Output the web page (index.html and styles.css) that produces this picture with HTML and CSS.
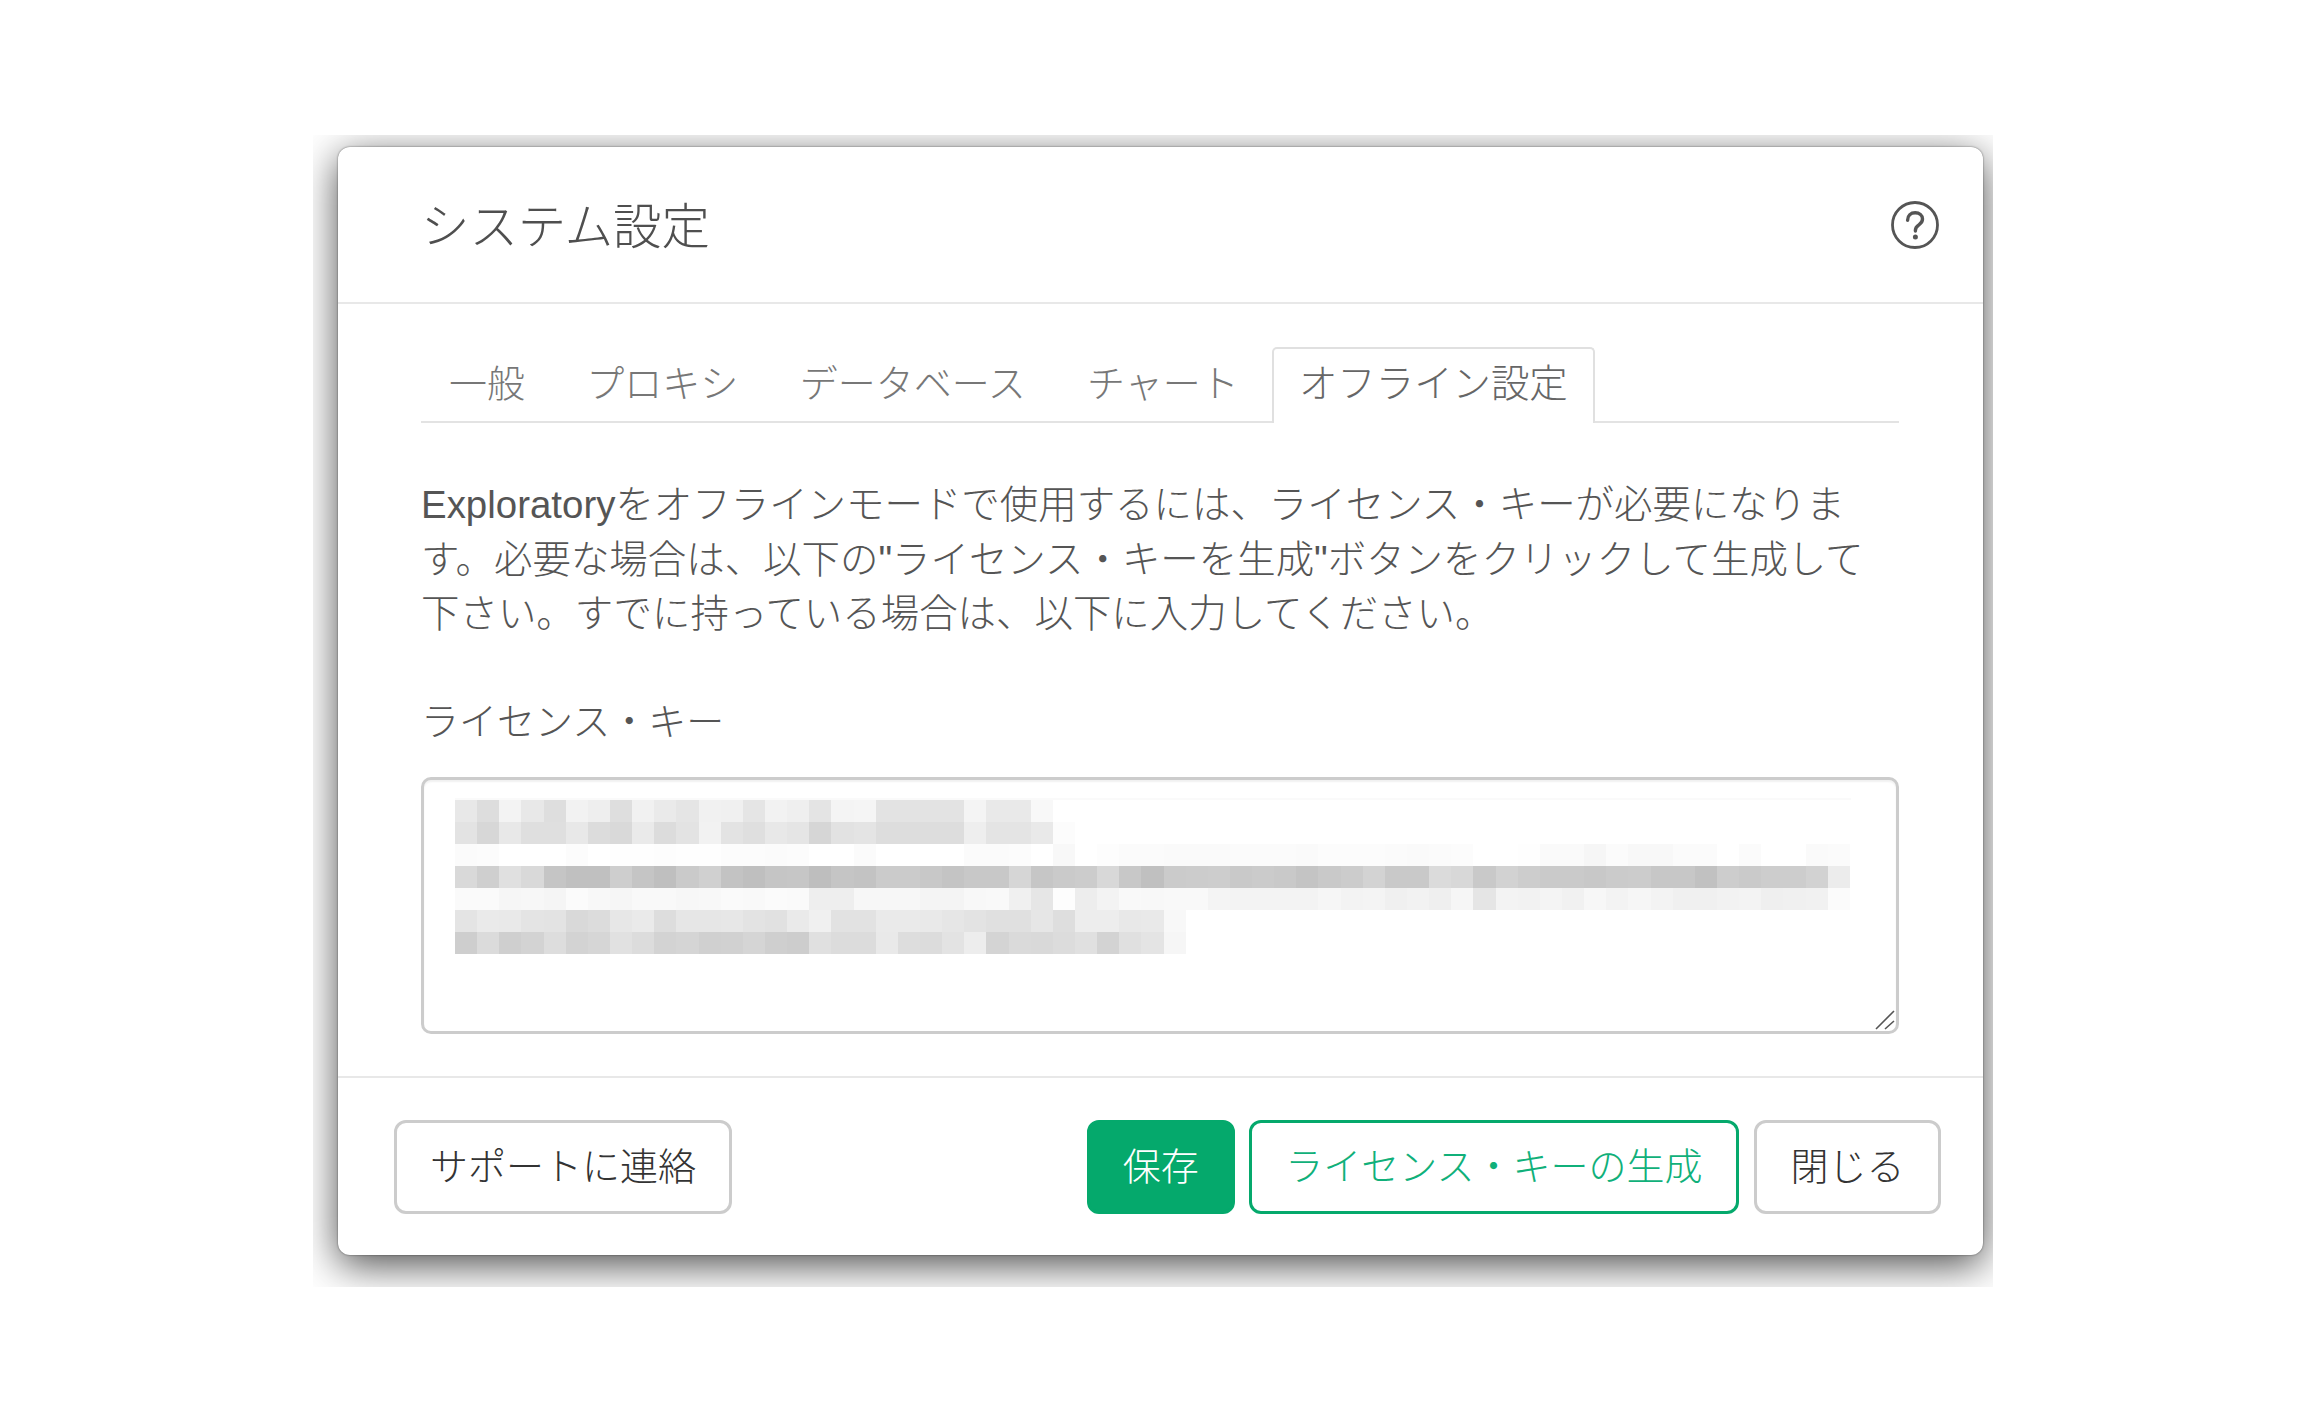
FILE: index.html
```html
<!DOCTYPE html>
<html lang="ja">
<head>
<meta charset="utf-8">
<title>システム設定</title>
<link rel="stylesheet" href="styles.css">
</head>
<body>
<div class="frame">
  <div class="modal">
    <header class="modal-header">
      <h1 class="modal-title">システム設定</h1>
      <svg class="help-icon" width="48" height="48" viewBox="0 0 48 48" fill="none" stroke="#555" aria-label="ヘルプ">
        <circle cx="24" cy="24" r="22.5" stroke-width="2.8"/>
        <path d="M16.6 19.2c0-4.6 3.3-7.4 7.6-7.4 4.2 0 7.3 2.6 7.3 6.3 0 2.8-1.5 4.3-3.6 5.7-2.3 1.5-3.5 2.6-3.5 5.4v.8" stroke-width="3.4" stroke-linecap="round"/>
        <circle cx="24.4" cy="36" r="2.5" fill="#555" stroke="none"/>
      </svg>
    </header>
    <div class="modal-body">
      <nav class="tabs">
        <a class="tab">一般</a>
        <a class="tab">プロキシ</a>
        <a class="tab">データベース</a>
        <a class="tab">チャート</a>
        <a class="tab tab-active">オフライン設定</a>
      </nav>
      <p class="description">Exploratoryをオフラインモードで使用するには、ライセンス・キーが必要になります。必要な場合は、以下の"ライセンス・キーを生成"ボタンをクリックして生成して下さい。すでに持っている場合は、以下に入力してください。</p>
      <label class="field-label">ライセンス・キー</label>
      <div class="key-box">
        <div class="key-pixels" id="key-pixels"></div>
        <svg class="resizer" width="20" height="20" viewBox="0 0 20 20" fill="none" stroke="#555" stroke-width="1.6">
          <path d="M1 19 19 1M10 19l9-8"/>
        </svg>
      </div>
    </div>
    <footer class="modal-footer">
      <button class="btn btn-default">サポートに連絡</button>
      <div class="footer-actions">
        <button class="btn btn-primary">保存</button>
        <button class="btn btn-outline">ライセンス・キーの生成</button>
        <button class="btn btn-default btn-close">閉じる</button>
      </div>
    </footer>
  </div>
</div>
<script src="pixels.js"></script>
</body>
</html>
```
FILE: styles.css
```css
* { box-sizing: border-box; }
html, body { margin: 0; background: #fff; }
body {
  padding: 135px 0 0 313px;
  font-family: "Liberation Sans", "Noto Sans CJK JP", sans-serif;
  font-weight: 300;
  color: #555;
}
.frame {
  width: 1680px;
  height: 1152px;
  padding: 12px 10px 32px 25px;
  overflow: hidden;
}
.modal {
  width: 1645px;
  height: 1108px;
  background: #fff;
  border-radius: 12px;
  box-shadow: 0 0 2px rgba(0, 0, 0, .55), 0 10px 40px rgba(0, 0, 0, .7);
  display: flex;
  flex-direction: column;
}
.modal-header {
  height: 157px;
  padding: 0 44px 3px 83px;
  border-bottom: 2px solid #e8e8e8;
  display: flex;
  align-items: center;
  justify-content: space-between;
}
.modal-title {
  margin: 0;
  font-size: 48.4px;
  font-weight: 300;
  color: #4f4f4f;
}
.help-icon {
  position: relative;
  top: 2px;
}
.modal-body {
  padding: 43px 84px 0 83px;
  height: 772px;
}
.tabs {
  display: flex;
  height: 76px;
  border-bottom: 2px solid #e3e3e3;
}
.tab {
  height: 76px;
  margin-right: 5.3px;
  padding: 0 26px;
  border: 2px solid transparent;
  border-bottom: 0;
  border-radius: 5px 5px 0 0;
  font-size: 38px;
  line-height: 70px;
  color: #777;
}
.tab-active {
  margin-right: 0;
  padding: 0 25px;
  border-color: #e0e0e0;
  background: #fff;
  font-size: 38.4px;
  color: #666;
}
.description {
  margin: 55px 0 0;
  font-size: 38.45px;
  line-height: 54.6px;
  color: #555;
}
.field-label {
  display: block;
  margin-top: 53px;
  font-size: 38px;
  line-height: 54px;
  color: #555;
}
.key-box {
  position: relative;
  height: 257px;
  margin-top: 28px;
  padding: 18px 0 0 31px;
  border: 3px solid #ccc;
  border-radius: 10px;
  box-shadow: inset 0 2px 2px rgba(0, 0, 0, .06);
}
.key-pixels {
  display: grid;
  grid-template-columns: repeat(63, 22.15px);
  grid-auto-rows: 22px;
  border-top: 2px solid #fafafa;
  width: 1396px;
  filter: blur(.6px);
}
.resizer {
  position: absolute;
  right: 1px;
  bottom: 1px;
}
.modal-footer {
  flex: 1;
  padding: 0 42px 0 56px;
  border-top: 2px solid #e8e8e8;
  display: flex;
  align-items: center;
  justify-content: space-between;
}
.footer-actions {
  display: flex;
  align-items: center;
}
.btn {
  height: 94px;
  padding: 0 33px 7px;
  border: 3px solid #ccc;
  border-radius: 12px;
  background: #fff;
  font: inherit;
  font-size: 38px;
  color: #333;
}
.btn-primary {
  background: #05a96c;
  border-color: #05a96c;
  color: #fff;
}
.btn-outline {
  margin-left: 14px;
  padding: 0 33.5px 7px;
  border-color: #05a96c;
  color: #10b07a;
}
.btn-close {
  margin-left: 15px;
  padding: 0 33.5px 7px;
}
```
FILE: pixels.js
```js
var rows = [
  "e8 dd f3 e8 de f2 ee de f1 ea e5 f1 f0 e5 f2 ef e4 f4 f5 e3 e3 e3 e3 f4 e9 e9 f8",
  "e3 d7 e8 df df e8 dc d9 ea dc e3 f2 e3 df e8 e5 d6 e2 e4 dd dd dd dd ee e4 e4 e9 fc",
  "fb fc ff ff ff fc ff fe fe fd fe fe fc fc fb fc ff ff fb ff ff ff ff fb fb fc ff f8 ff fd fb fb fa fa fa fb fb fb fa fc fc fc fb fa fb fc ff ff fe fa fa f6 fb f8 f8 fb fb ff fb ff ff fa fb",
  "d9 cf e0 d9 c5 c0 c0 ce c5 bf ca d0 c3 bf c5 c6 be c5 c3 cb cb c8 c4 c8 c8 d6 c6 ca cc d8 c8 c0 cb cc cd c9 cb c9 c4 c9 cc d3 c9 c9 db d8 c9 d2 cd ca ca c8 cb cc c7 c7 c1 cd ca cd cd d2 ec",
  "fa fa f6 f7 f5 fb f8 f6 f9 f9 f7 f8 fa f9 fb fa ee ee f7 f7 f7 f4 f4 f8 f9 f0 e6 fd ed f3 f9 f8 f9 f9 f4 f3 f3 f3 f3 f6 f3 f4 f0 f2 ef f6 e5 f3 f2 f4 f1 f7 f3 f6 f3 f0 f0 f2 f3 ef f0 f1 fb",
  "e4 ea e9 e4 e3 d9 dc e7 ea dd e6 e6 e7 e3 e1 ea f0 e2 e2 ea ea e9 e6 e3 e0 e0 e6 de ed ed e8 e9 f8",
  "ce db cf d3 dd d3 d6 e1 dc d3 d5 d0 d1 d5 cf cd e0 dc dc e9 dd dc e3 ed d4 da d9 dc e0 d3 e0 e4 f6"
];
var grid = document.getElementById("key-pixels");
rows.forEach(function (row) {
  var cells = row.split(" ");
  for (var i = 0; i < 63; i++) {
    var cell = document.createElement("span");
    var v = cells[i] || "ff";
    cell.style.backgroundColor = "#" + v + v + v;
    grid.appendChild(cell);
  }
});
```
